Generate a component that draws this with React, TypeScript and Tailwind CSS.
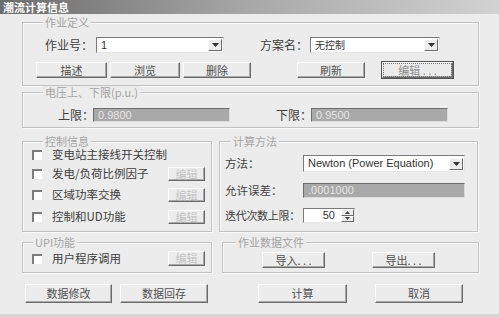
import type { ReactNode } from 'react'

const cjk = "font-['Noto_Sans_CJK_SC','Noto_Sans',sans-serif]"

function Group({ title, className, legendLeft = 'left-[20px]', children }: { title: string; className: string; legendLeft?: string; children: ReactNode }) {
  return (
    <div className={`relative border border-[#c2c2c2] shadow-[inset_1px_1px_0_#fafafa,1px_1px_0_#fafafa] ${className}`}>
      <span className={`absolute -top-[7px] ${legendLeft} whitespace-nowrap bg-[#ececec] px-[2px] text-[11px] leading-[12px] text-[#a4a4a4]`}>{title}</span>
      {children}
    </div>
  )
}

function Btn({ label, className, disabled, focused }: { label: string; className: string; disabled?: boolean; focused?: boolean }) {
  return (
    <div
      className={`flex shrink-0 items-center justify-center bg-[#ececec] border border-t-[#fdfdfd] border-l-[#fdfdfd] border-r-[#6a6a6a] border-b-[#6a6a6a] shadow-[inset_-1px_-1px_0_#a9a9a9] ${
        focused ? 'outline outline-1 outline-[#555]' : ''
      } ${className}`}
    >
      {focused ? (
        <span className="flex h-full w-full items-center justify-center border border-dotted border-[#777] text-[11px] text-[#8c8c8c]">{label}</span>
      ) : (
        <span className={`whitespace-nowrap text-[11px] leading-none ${disabled ? 'text-[#c4c4c4]' : 'text-[#505050]'}`}>{label}</span>
      )}
    </div>
  )
}

function Combo({ value, className, latin }: { value: string; className: string; latin?: boolean }) {
  return (
    <div className={`flex shrink-0 items-center bg-white border border-t-[#7a7a7a] border-l-[#7a7a7a] border-r-[#e6e6e6] border-b-[#e6e6e6] ${className}`}>
      <span className={`flex-1 whitespace-nowrap pl-[4px] leading-none text-[#333] ${latin ? "font-['Liberation_Sans',sans-serif] text-[11px]" : 'text-[10px]'}`}>{value}</span>
      <div className="mr-[1px] flex h-[12px] w-[14px] items-center justify-center bg-[#ececec] border border-t-[#fdfdfd] border-l-[#fdfdfd] border-r-[#6a6a6a] border-b-[#6a6a6a]">
        <svg width="7" height="4" viewBox="0 0 7 4"><path d="M0 0h7L3.5 4z" fill="#333" /></svg>
      </div>
    </div>
  )
}

function Field({ value, className }: { value: string; className: string }) {
  return (
    <div className={`flex shrink-0 items-center bg-[#a9a9a9] border border-t-[#6e6e6e] border-l-[#6e6e6e] border-r-[#dcdcdc] border-b-[#dcdcdc] ${className}`}>
      <span className="pl-[4px] font-['Liberation_Sans',sans-serif] text-[11px] leading-none text-[#e4e4e4]">{value}</span>
    </div>
  )
}

function Check() {
  return <div className="h-[10px] w-[10px] shrink-0 bg-white border-t-2 border-l-2 border-[#7c7c7c]" />
}

export default function App() {
  return (
    <div className={`flex h-[317px] w-[499px] flex-col bg-[#ececec] text-[#404040] ${cjk}`}>
      <div className="flex h-[14px] items-center bg-gradient-to-r from-[#6c6c6c] via-[#a8a8a8] to-[#d2d2d2] pl-[3px]">
        <span className="text-[11px] font-bold leading-none text-white">潮流计算信息</span>
      </div>

      <div className="flex flex-1 flex-col pl-[22px]">
        {/* 作业定义 */}
        <Group title="作业定义" className="mt-[8px] h-[64px] w-[457px]">
          <div className="flex h-[16px] items-center mt-[14px]">
            <span className="ml-[22px] w-[51px] shrink-0 whitespace-nowrap text-[12px]">作业号：</span>
            <Combo value="1" className="h-[16px] w-[128px]" latin />
            <span className="ml-[36px] w-[50px] shrink-0 whitespace-nowrap text-[12px]">方案名：</span>
            <Combo value="无控制" className="h-[16px] w-[130px]" />
          </div>
          <div className="mt-[9px] flex">
            <Btn label="描述" className="ml-[13px] h-[16px] w-[71px]" />
            <Btn label="浏览" className="ml-[3px] h-[16px] w-[70px]" />
            <Btn label="删除" className="ml-[3px] h-[16px] w-[68px]" />
            <Btn label="刷新" className="ml-[46px] h-[16px] w-[68px]" />
            <Btn label="编辑 . . ." className="ml-[17px] h-[16px] w-[71px]" focused />
          </div>
        </Group>

        {/* 电压上下限 */}
        <Group title="电压上、下限(p.u.)" className="mt-[6px] h-[36px] w-[457px]">
          <div className="mt-[15px] flex h-[14px] items-center">
            <span className="ml-[35px] w-[35px] shrink-0 whitespace-nowrap text-[12px]">上限：</span>
            <Field value="0.9800" className="h-[14px] w-[137px]" />
            <span className="ml-[46px] w-[35px] shrink-0 whitespace-nowrap text-[12px]">下限：</span>
            <Field value="0.9500" className="h-[14px] w-[137px]" />
          </div>
        </Group>

        <div className="mt-[13px] flex">
          {/* 控制信息 */}
          <Group title="控制信息" className="h-[91px] w-[190px]">
            <div className="flex flex-col pl-[9px] pr-[6px]">
              <div className="mt-[6px] flex h-[13px] items-center">
                <Check />
                <span className="ml-[10px] whitespace-nowrap text-[11.5px] leading-none">变电站主接线开关控制</span>
              </div>
              <div className="mt-[6px] flex h-[14px] items-center">
                <Check />
                <span className="ml-[10px] flex-1 whitespace-nowrap text-[11.5px] leading-none">发电/负荷比例因子</span>
                <Btn label="编辑" disabled className="h-[14px] w-[37px]" />
              </div>
              <div className="mt-[7px] flex h-[14px] items-center">
                <Check />
                <span className="ml-[10px] flex-1 whitespace-nowrap text-[11.5px] leading-none">区域功率交换</span>
                <Btn label="编辑" disabled className="h-[14px] w-[37px]" />
              </div>
              <div className="mt-[8px] flex h-[14px] items-center">
                <Check />
                <span className="ml-[10px] flex-1 whitespace-nowrap text-[11.5px] leading-none">控制和UD功能</span>
                <Btn label="编辑" disabled className="h-[14px] w-[37px]" />
              </div>
            </div>
          </Group>

          {/* 计算方法 */}
          <Group title="计算方法" legendLeft="left-[11px]" className="ml-[7px] h-[91px] w-[259px]">
            <div className="flex flex-col pl-[5px]">
              <div className="mt-[13px] flex h-[17px] items-center">
                <span className="w-[78px] shrink-0 whitespace-nowrap text-[11.5px]">方法：</span>
                <Combo value="Newton (Power Equation)" className="h-[17px] w-[162px]" latin />
              </div>
              <div className="mt-[11px] flex h-[15px] items-center">
                <span className="w-[78px] shrink-0 whitespace-nowrap text-[11.5px]">允许误差：</span>
                <Field value=".0001000" className="h-[15px] w-[162px]" />
              </div>
              <div className="mt-[10px] flex h-[15px] items-center">
                <span className="w-[78px] shrink-0 whitespace-nowrap text-[11px] tracking-[-0.3px]">迭代次数上限：</span>
                <div className="flex h-[15px] w-[52px] shrink-0 items-center bg-white border border-t-[#7a7a7a] border-l-[#7a7a7a] border-r-[#e6e6e6] border-b-[#e6e6e6]">
                  <span className="flex-1 pr-[6px] text-right font-['Liberation_Sans',sans-serif] text-[11px] leading-none text-[#333]">50</span>
                  <div className="flex h-full w-[13px] flex-col">
                    <div className="flex flex-1 items-center justify-center bg-[#ececec] border border-t-[#fdfdfd] border-l-[#fdfdfd] border-r-[#6a6a6a] border-b-[#6a6a6a]">
                      <svg width="5" height="3" viewBox="0 0 5 3"><path d="M0 3h5L2.5 0z" fill="#444" /></svg>
                    </div>
                    <div className="flex flex-1 items-center justify-center bg-[#ececec] border border-t-[#fdfdfd] border-l-[#fdfdfd] border-r-[#6a6a6a] border-b-[#6a6a6a]">
                      <svg width="5" height="3" viewBox="0 0 5 3"><path d="M0 0h5L2.5 3z" fill="#444" /></svg>
                    </div>
                  </div>
                </div>
              </div>
            </div>
          </Group>
        </div>

        <div className="mt-[10px] flex">
          {/* UPI功能 */}
          <Group title="UPI功能" legendLeft="left-[10px]" className="h-[31px] w-[190px]">
            <div className="mt-[8px] flex h-[15px] items-center pl-[9px] pr-[6px]">
              <Check />
              <span className="ml-[10px] flex-1 whitespace-nowrap text-[11.5px] leading-none">用户程序调用</span>
              <Btn label="编辑" disabled className="h-[15px] w-[37px]" />
            </div>
          </Group>

          {/* 作业数据文件 */}
          <Group title="作业数据文件" legendLeft="left-[13px]" className="ml-[10px] h-[31px] w-[257px]">
            <div className="mt-[9px] flex">
              <Btn label="导入. . ." className="ml-[39px] h-[16px] w-[63px]" />
              <Btn label="导出. . ." className="ml-[47px] h-[16px] w-[63px]" />
            </div>
          </Group>
        </div>

        <div className="mt-[11px] flex">
          <Btn label="数据修改" className="ml-[3px] h-[19px] w-[87px]" />
          <Btn label="数据回存" className="ml-[8px] h-[19px] w-[88px]" />
          <Btn label="计算" className="ml-[50px] h-[19px] w-[89px]" />
          <Btn label="取消" className="ml-[28px] h-[19px] w-[88px]" />
        </div>
      </div>
      <div className="h-[3px] bg-[#d6d6d6]" />
    </div>
  )
}
